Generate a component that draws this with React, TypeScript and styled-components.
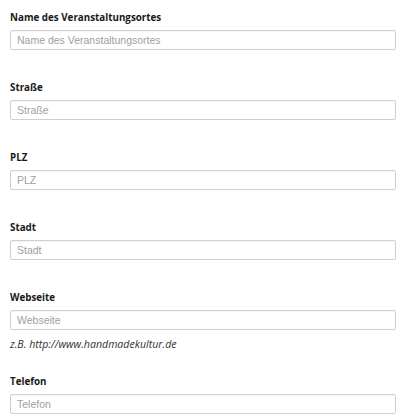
import React from 'react';
import styled, { createGlobalStyle } from 'styled-components';

const GlobalStyle = createGlobalStyle`
	html, body {
		margin: 0;
		padding: 0;
		background: #fff;
	}
	body {
		font-family: 'Open Sans', 'Liberation Sans', sans-serif;
		color: #333;
	}
`;

const Form = styled.form`
	padding: 11px 4px 0 10px;
	width: 386px;
`;

const Group = styled.div<{ $tight?: boolean }>`
	display: flex;
	flex-direction: column;
	margin-bottom: ${props => (props.$tight ? '23px' : '31px')};

	&:last-child {
		margin-bottom: 0;
	}
`;

const Label = styled.label`
	font-family: 'Open Sans', sans-serif;
	font-weight: 700;
	font-size: 9.8px;
	line-height: 14px;
	color: #1a1a1a;
	margin-bottom: 5px;
`;

const Input = styled.input`
	box-sizing: border-box;
	width: 100%;
	height: 20px;
	margin: 0;
	padding: 0 6px;
	border: 1px solid #d0d0d0;
	border-radius: 2px;
	box-shadow: inset 0 1px 1px rgba(0, 0, 0, 0.04);
	font-family: 'Liberation Sans', Arial, sans-serif;
	font-size: 10.5px;
	color: #333;
	background: #fff;

	&::placeholder {
		color: #a0a0a0;
	}
`;

const Help = styled.p`
	margin: 6px 0 0;
	font-family: 'Open Sans', sans-serif;
	font-style: italic;
	font-size: 10.6px;
	line-height: 16px;
	color: #333;
`;

const fields = [
	{ id: 'name', label: 'Name des Veranstaltungsortes' },
	{ id: 'street', label: 'Straße' },
	{ id: 'zip', label: 'PLZ' },
	{ id: 'city', label: 'Stadt' },
	{ id: 'web', label: 'Webseite', help: 'z.B. http://www.handmadekultur.de' },
	{ id: 'phone', label: 'Telefon' },
];

export default function App() {
	return (
		<>
			<GlobalStyle />
			<Form>
				{fields.map(f => (
					<Group key={f.id} $tight={!!f.help}>
						<Label htmlFor={f.id}>{f.label}</Label>
						<Input id={f.id} type="text" placeholder={f.label} />
						{f.help && <Help>{f.help}</Help>}
					</Group>
				))}
			</Form>
		</>
	);
}
